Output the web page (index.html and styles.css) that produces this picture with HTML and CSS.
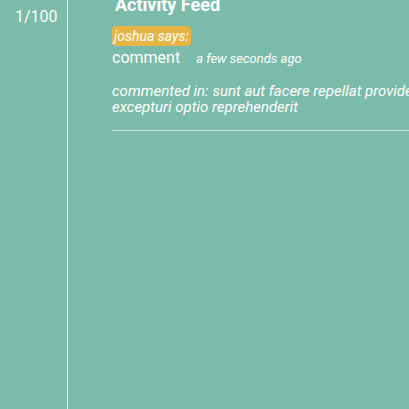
FILE: index.html
```html
<!DOCTYPE html>
<html>
<head>
<meta charset="utf-8">
<link rel="stylesheet" href="styles.css">
</head>
<body>
<div class="app">
  <aside class="sidebar">1/100</aside>
  <main class="main">
    <h1 class="title">Activity Feed</h1>
    <div class="feed">
      <div class="item">
        <span class="badge">joshua says:</span>
        <div class="meta">
          <span class="kind">comment</span>
          <span class="time">a few seconds ago</span>
        </div>
        <p class="body">commented in: sunt aut facere repellat provident occaecati excepturi optio reprehenderit</p>
      </div>
      <hr class="sep">
    </div>
  </main>
</div>
</body>
</html>
```
FILE: styles.css
```css
html, body {
  margin: 0;
  padding: 0;
  overflow: hidden;
}
body {
  background: #7abbaa;
  color: #ffffff;
  font-family: Roboto, "Liberation Sans", sans-serif;
}
.app {
  display: flex;
  height: 409px;
}
.sidebar {
  flex: 0 0 auto;
  width: 52px;
  padding: 7px 0 0 15px;
  border-right: 1px solid #ffffff;
  font-size: 16px;
  line-height: normal;
}
.main {
  flex: 0 0 auto;
  padding-left: 44px;
}
.title {
  margin: -6px 0 0 3px;
  font-size: 18px;
  font-weight: 700;
  line-height: normal;
}
.feed {
  width: 400px;
}
.item {
  margin-top: 11px;
}
.badge {
  display: inline-block;
  background: #e7b546;
  border-radius: 4px;
  padding: 0 2px;
  height: 20px;
  line-height: 20px;
  font-size: 14px;
  font-style: italic;
}
.meta {
  margin-top: 2px;
  display: flex;
  align-items: baseline;
  gap: 16px;
  line-height: normal;
}
.kind {
  font-size: 16px;
}
.time {
  font-size: 13px;
  font-style: italic;
}
.body {
  margin: 16px 0 0;
  font-size: 15px;
  font-style: italic;
  line-height: 16px;
}
.sep {
  margin: 15px 0 0;
  border: 0;
  border-top: 1px solid rgba(255, 255, 255, 0.6);
  height: 0;
}
```
